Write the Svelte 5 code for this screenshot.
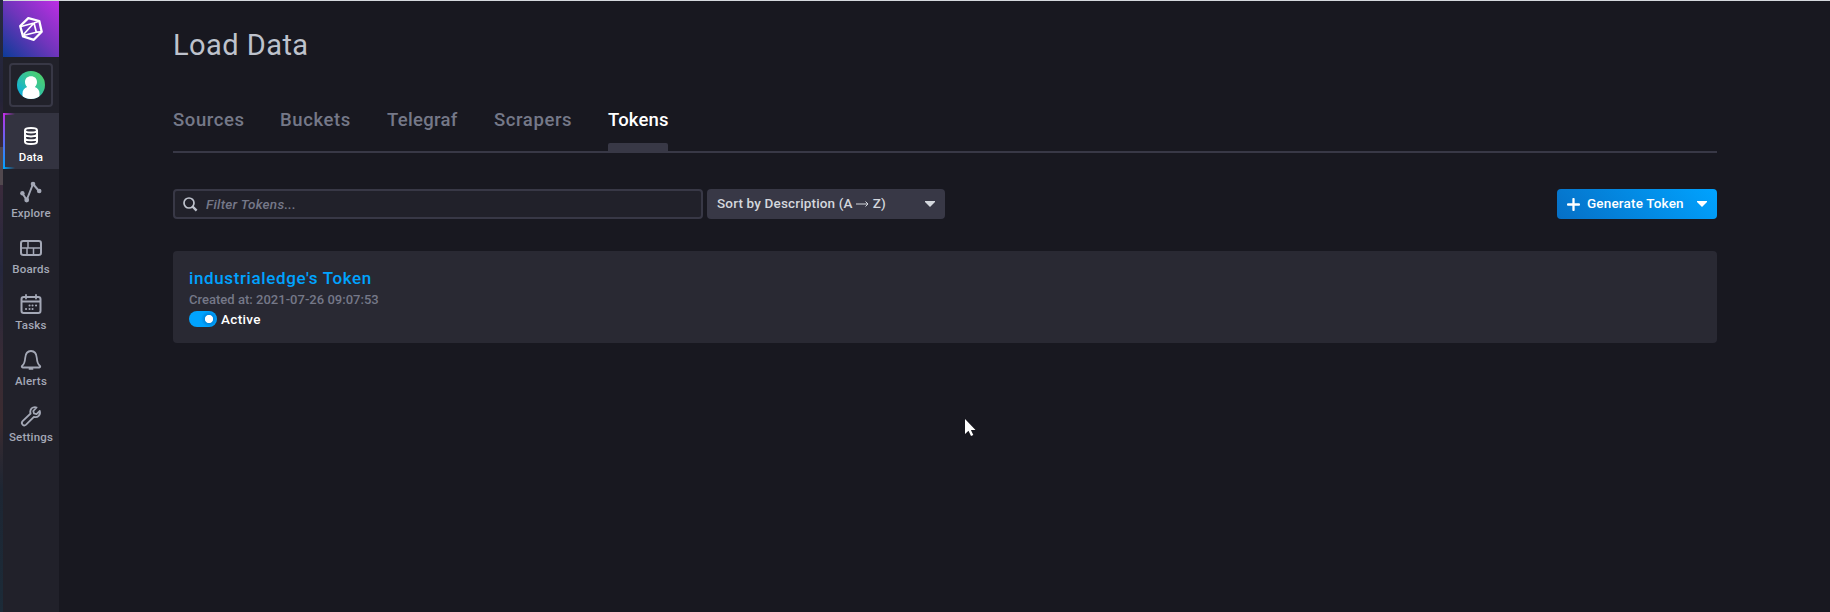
<script>
  const nav = ['Data', 'Explore', 'Boards', 'Tasks', 'Alerts', 'Settings'];
  const tabs = ['Sources', 'Buckets', 'Telegraf', 'Scrapers', 'Tokens'];
  let active = $state('Tokens');
  let filter = $state('');
</script>

<div class="app">
  <div class="edge"></div>
  <aside>
    <div class="logo">
      <svg width="24" height="24" viewBox="0 0 24 24" fill="none" stroke="#fff" stroke-width="2.300" stroke-linejoin="round">
        <path d="M9.3 1.2 20.3 4 22.7 14.8 14.8 22.8 4 19.4 1.2 9Z" />
        <path d="M2 9.500 15 6 17.300 15.200 22.500 14.800M15 6 4.500 17.500M17.300 15.200 4.200 18.500M15 6 20 4.200" stroke-width="1.700" />
      </svg>
    </div>
    <div class="user">
      <div class="avatar">
        <svg width="28" height="28" viewBox="0 0 28 28">
          <defs>
            <linearGradient id="av" x1="0" y1="1" x2="1" y2="0"><stop offset="0" stop-color="#00a8f0" /><stop offset=".5" stop-color="#32c2a0" /><stop offset="1" stop-color="#55d45c" /></linearGradient>
            <clipPath id="disc"><circle cx="14" cy="14" r="14" /></clipPath>
          </defs>
          <circle cx="14" cy="14" r="14" fill="url(#av)" />
          <path clip-path="url(#disc)" fill="#fff" d="M14 5.3c3.700 0 6 2.400 6 5.700 0 2-.8 3.800-2.200 4.900 3 1.100 4.700 3.300 4.700 6.400V28h-17v-5.700c0-3.100 1.700-5.300 4.700-6.400C8.800 14.800 8 13 8 11c0-3.300 2.300-5.700 6-5.700Z" />
        </svg>
      </div>
    </div>
    <nav>
      {#each nav as item}
        <div class="item" class:current={item === 'Data'}>
          <svg width="24" height="22" viewBox="0 0 24 22" fill="none" stroke="currentColor" stroke-width="1.8" stroke-linecap="round" stroke-linejoin="round">
            {#if item === 'Data'}
              <path d="M6 5.200c0-1.500 2.600-2.300 6-2.300s6 .8 6 2.300-2.600 2.300-6 2.300-6-.8-6-2.300v11.600c0 1.500 2.600 2.300 6 2.300s6-.8 6-2.300V5.200M6 9.100c0 1.500 2.600 2.300 6 2.300s6-.8 6-2.300M6 13c0 1.500 2.600 2.300 6 2.300s6-.8 6-2.300" stroke-width="2" />
            {:else if item === 'Explore'}
              <path d="m3.500 12.500 4.200 6.500L14 3l6 7" stroke-width="2" />
              <g fill="currentColor" stroke="none"><circle cx="3.400" cy="12.300" r="2.200" /><circle cx="7.700" cy="19" r="2.400" /><circle cx="14" cy="3" r="2.300" /><circle cx="20.200" cy="10" r="2.300" /></g>
            {:else if item === 'Boards'}
              <rect x="2" y="4" width="20" height="14" rx="2.200" stroke-width="2" /><path d="M2.500 11h19M9 4.500V11M14.500 11v6.500M8 11v6.500" stroke-width="1.500" />
            {:else if item === 'Tasks'}
              <rect x="2.500" y="4" width="19" height="16" rx="2.200" stroke-width="2" /><path d="M3 8.500h18M7 2v3.500M17 2v3.500" />
              <path d="M10.500 12.500h.1M13.500 12.500h.1M17 12.500h.1M7 16h.1M10.500 16h.1M13.500 16h.1" stroke-width="2" />
            {:else if item === 'Alerts'}
              <path d="M12 2C8 2 6.500 5 6.200 9c-.3 4-1.200 6.300-3 7.700-.8.700-.5 1.800.5 1.800h16.600c1 0 1.300-1.100.5-1.800-1.800-1.400-2.700-3.700-3-7.700C17.500 5 16 2 12 2Z" />
              <path d="M10.500 19.900h3" />
            {:else}
              <path d="M17.600 2.500c-2.400-.8-5.100.2-6 2.400-.5 1.200-.4 2.500 0 3.600l-8 7.600c-2.200 2.400 1 5.800 3.500 3.500l7.800-7.800c3.800 1.200 7-2 5.900-5.900l-3.300 3.300-2.500-.7-.7-2.500 3.300-3.500Z" />
            {/if}
          </svg>
          <span>{item}</span>
        </div>
      {/each}
    </nav>
  </aside>

  <main>
    <h1>Load Data</h1>
    <div class="tabs">
      {#each tabs as tab}
        <button class="tab {tab.toLowerCase()}" class:on={tab === active} onclick={() => (active = tab)}>{tab}</button>
      {/each}
    </div>
    <div class="toolbar">
      <label class="search">
        <svg width="15" height="15" viewBox="0 0 15 15" fill="none" stroke="#bec2cc"><circle cx="6" cy="6" r="5" stroke-width="1.700" /><path d="m9.600 9.600 4 4" stroke-width="2.300" /></svg>
        <input bind:value={filter} placeholder="Filter Tokens..." />
      </label>
      <button class="sort"><span>Sort by Description (A <svg width="13" height="8" viewBox="0 0 13 8" fill="none" stroke="currentColor"><path d="M0 4h12M9.500 1.500 12 4 9.500 6.500" /></svg> Z)</span><i></i></button>
      <button class="generate">
        <svg width="13" height="13" viewBox="0 0 13 13" stroke="#fff" stroke-width="2.300" stroke-linecap="round"><path d="M6.500 1v11M1 6.500h11" /></svg>
        <span>Generate Token</span><i></i>
      </button>
    </div>
    <section class="card">
      <div class="name">industrialedge's Token</div>
      <div class="created">Created at: 2021-07-26 09:07:53</div>
      <div class="state"><div class="toggle"></div><span>Active</span></div>
    </section>
  </main>

  <svg class="cursor" width="12" height="19" viewBox="0 0 12 19"><path d="M0 0v15l3.500-3.300 2.500 5.300 2.300-1-2.400-5H10.500Z" fill="#fff" /></svg>
</div>

<style>
  :global(body) { background: #181820; overflow: hidden; }
  * { box-sizing: border-box; }
  .app { position: relative; display: flex; height: 612px; background: #181820; font-family: Roboto, sans-serif; font-weight: 500; color: #fff; }
  .edge { width: 3px; background: linear-gradient(#272b42 0, #242337 100px, #3a2938 147px, #51484e 147px, #51484e 185px, #3b2b3c 185px, #25273d 270px, #382b35 360px, #3b2b30 420px, #1d2633 490px, #1c2b38); }
  aside { width: 56px; background: #21212a; border-top: 1px solid #d4d8dd; }
  .logo { height: 56px; display: flex; align-items: center; justify-content: center; background: linear-gradient(45deg, #0c3c98, #6f35bb 50%, #be2ee4); }
  .user { height: 56px; padding: 6px; }
  .avatar { width: 44px; height: 44px; border: 2px solid #383846; border-radius: 4px; display: flex; align-items: center; justify-content: center; }
  .item { height: 56px; display: flex; flex-direction: column; align-items: center; padding-top: 12px; color: #a4a8b6; font-size: 11.5px; line-height: 13px; letter-spacing: .2px; }
  .item svg { flex: none; margin-bottom: 1px; overflow: visible; }
  .item span { margin-top: 3px; white-space: nowrap; }
  .current { color: #fff; background: linear-gradient(90deg, #be2ee4, transparent) 0 0 / 12px 2px no-repeat, linear-gradient(90deg, #00a3ff, transparent) 0 100% / 12px 2px no-repeat, linear-gradient(#be2ee4, #00a3ff) 0 0 / 2px 100% no-repeat, #333340; }
  main { flex: 1; padding: 0 113px 0 114px; border-top: 1px solid #d4d8dd; }
  h1 { margin: 27px 0 0; font-size: 29px; line-height: 34px; font-weight: 400; color: #bec2cc; letter-spacing: .45px; }
  button { border: 0; font: inherit; color: inherit; padding: 0; background: none; text-align: left; }
  .tabs { margin-top: 38px; height: 53px; display: flex; gap: 36px; border-bottom: 2px solid #383846; }
  .tab { font-size: 18.5px; line-height: 22px; color: #757888; height: 51px; padding-top: 9px; display: flex; flex-direction: column; justify-content: space-between; white-space: nowrap; letter-spacing: .6px; }
  .sources { width: 71px; } .buckets { width: 71px; } .telegraf { width: 71px; letter-spacing: .3px; } .scrapers { width: 78px; } .tokens { width: 60px; letter-spacing: .15px; }
  .on { color: #fff; }
  .on::after { content: ''; height: 8px; width: 100%; background: #383846; border-radius: 2px 2px 0 0; }
  .toolbar { display: flex; margin-top: 36px; height: 30px; }
  .search { width: 530px; border: 2px solid #383846; border-radius: 4px; background: #21212a; display: flex; align-items: center; padding-left: 8px; gap: 8px; }
  input { flex: 1; padding: 0; border: 0; outline: 0; background: none; color: #bec2cc; font: italic 500 13.5px Roboto, sans-serif; letter-spacing: .25px; }
  input::placeholder { color: #757888; opacity: 1; }
  .sort, .generate { display: flex; align-items: center; border-radius: 4px; font-size: 13.5px; white-space: nowrap; padding: 0 10px; }
  .sort { width: 238px; margin-left: 4px; background: #383846; color: #d4d7dd; justify-content: space-between; letter-spacing: .16px; }
  .sort span, .generate span { padding-bottom: 2px; }
  .generate { width: 160px; margin-left: auto; background: linear-gradient(45deg, #066fc5, #00a3ff); letter-spacing: .17px; }
  .generate span { margin-left: 7px; }
  .generate i { margin-left: auto; }
  i { width: 10px; height: 6px; background: currentColor; clip-path: polygon(0 0, 100% 0, 100% 17%, 50% 100%, 0 17%); }
  .card { margin-top: 32px; height: 92px; border-radius: 4px; background: #292933; padding: 17px 16px; }
  .name { color: #00a3ff; font-size: 17px; line-height: 20px; letter-spacing: .62px; }
  .created { color: #757888; font-size: 13px; line-height: 16px; margin-top: 4px; letter-spacing: .02px; }
  .state { display: flex; align-items: center; gap: 4px; margin-top: 3px; height: 16px; font-size: 13.5px; letter-spacing: .35px; }
  .toggle { width: 28px; height: 16px; border-radius: 8px; background: radial-gradient(circle at 20px 8px, #fff 3.700px, #0088e0 4.500px, #00a3ff 8px); }
  .cursor { position: absolute; left: 965px; top: 419px; }
</style>
